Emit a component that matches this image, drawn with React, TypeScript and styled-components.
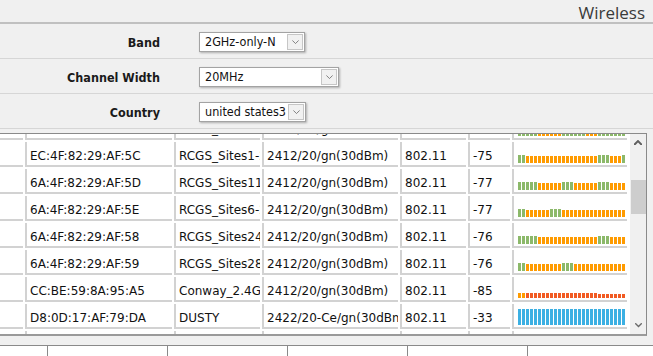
import React, { useLayoutEffect, useRef } from "react";
import styled, { createGlobalStyle } from "styled-components";

const GlobalStyle = createGlobalStyle`
  html, body { margin: 0; padding: 0; background: #f0f0f0; }
  body { width: 653px; height: 356px; overflow: hidden; }
  * { box-sizing: border-box; }
`;

const condensed = `"DejaVu Sans Condensed", "DejaVu Sans", "Liberation Sans Narrow", sans-serif`;

const Page = styled.div`
  display: flex;
  flex-direction: column;
  width: 653px;
  height: 356px;
  background: #f0f0f0;
  overflow: hidden;
`;

const TitleBar = styled.div`
  height: 24px;
  display: flex;
  justify-content: flex-end;
  align-items: flex-end;
  padding-right: 8px;
  border-bottom: 2px solid #c0c0c0;
`;

const Title = styled.h1`
  margin: 0;
  font-family: "Open Sans", "Noto Sans", sans-serif;
  font-weight: 400;
  font-size: 17px;
  line-height: 18px;
  color: #3a3a3a;
`;

const Form = styled.div`
  display: flex;
  flex-direction: column;
`;

const FormRow = styled.div`
  height: 35px;
  padding-top: 2px;
  display: flex;
  align-items: center;
  gap: 39px;
  border-bottom: 1px solid #d6d6d6;
`;

const Label = styled.label`
  width: 160px;
  text-align: right;
  font-family: ${condensed};
  font-stretch: condensed;
  font-weight: bold;
  font-size: 12.5px;
  color: #1a1a1a;
`;

const SelectBox = styled.div<{ $width: number }>`
  width: ${(p) => p.$width}px;
  height: 20px;
  display: flex;
  align-items: stretch;
  background: #fff;
  border: 1px solid #a3a3a3;
  box-shadow: 1px 1px 2px rgba(0, 0, 0, 0.28);
`;

const SelectValue = styled.span`
  flex: 1;
  min-width: 0;
  overflow: hidden;
  white-space: nowrap;
  padding-left: 5px;
  font-family: ${condensed};
  font-stretch: condensed;
  font-size: 12.5px;
  line-height: 18px;
  color: #111;
`;

const ArrowBox = styled.span`
  flex: 0 0 16px;
  margin: 1px;
  border: 1px solid #c6c6c6;
  background: #f1f1f1;
  display: flex;
  align-items: center;
  justify-content: center;
`;

const Frame = styled.div`
  margin-top: 4px;
  width: 647px;
  height: 203px;
  display: flex;
  border-top: 1px solid #8a8a8a;
  border-right: 1px solid #8a8a8a;
  border-bottom: 2px solid #9a9a9a;
  background: #fff;
`;

const Viewport = styled.div`
  flex: 0 0 630px;
  height: 200px;
  overflow: hidden;
  background: #fff;
`;

const RowList = styled.div`
  display: flex;
  flex-direction: column;
  gap: 2px;
`;

const Row = styled.div`
  display: grid;
  grid-template-columns: 23px 147px 86px 136px 66px 42px 115px;
  column-gap: 2px;
`;

const Cell = styled.div<{ $first?: boolean }>`
  height: 25px;
  padding: 7px 0 0 3px;
  border-bottom: 2px solid #d2d2d2;
  border-left: ${(p) => (p.$first ? "none" : "2px solid #d2d2d2")};
  font-family: "DejaVu Sans", Verdana, sans-serif;
  font-size: 12px;
  line-height: 14px;
  color: #111;
  white-space: nowrap;
  overflow: hidden;
`;

const BarCell = styled.div`
  height: 25px;
  padding: 0 0 2px 4px;
  border-bottom: 2px solid #d2d2d2;
  border-left: 2px solid #d2d2d2;
  display: flex;
  align-items: flex-end;
  gap: 1px;
  overflow: hidden;
`;

type BarKind = "g" | "o" | "O" | "r" | "s" | "b";

const barStyle: Record<BarKind, { h: number; c: string }> = {
  g: { h: 8, c: "#8cb96a" },
  o: { h: 7, c: "#ff9b00" },
  O: { h: 5, c: "#ff9b00" },
  r: { h: 5, c: "#f15a22" },
  s: { h: 4, c: "#f15a22" },
  b: { h: 16, c: "#3cb0e3" },
};

const Bar = styled.span<{ $kind: BarKind }>`
  flex: 0 0 3px;
  height: ${(p) => barStyle[p.$kind].h}px;
  background: ${(p) => barStyle[p.$kind].c};
`;

const Scrollbar = styled.div`
  flex: 0 0 16px;
  height: 200px;
  background: #f0f0f0;
  display: flex;
  flex-direction: column;
`;

const ScrollArrow = styled.div`
  flex: 0 0 17px;
  display: flex;
  align-items: center;
  justify-content: center;
`;

const Track = styled.div`
  flex: 1;
  display: flex;
  flex-direction: column;
`;

const Thumb = styled.div<{ $offset: number; $size: number }>`
  margin-top: ${(p) => p.$offset}px;
  margin-left: 1px;
  width: 15px;
  height: ${(p) => p.$size}px;
  background: #cdcdcd;
`;

const BottomStrip = styled.div`
  margin-top: 9px;
  height: 11px;
  display: flex;
  background: #fff;
  border-top: 1px solid #8a8a8a;
`;

const BottomCell = styled.div<{ $width?: number }>`
  flex: ${(p) => (p.$width ? `0 0 ${p.$width}px` : "1")};
  border-right: ${(p) => (p.$width ? "1px solid #8a8a8a" : "none")};
`;

const Chevron = ({ dir, size = 8, color = "#5f5f5f", stroke = 2 }: { dir: "up" | "down"; size?: number; color?: string; stroke?: number }) => (
  <svg width={size} height={size / 2 + 1} viewBox="0 0 8 5" fill="none">
    <polyline
      points={dir === "up" ? "0.8,4.3 4,1.1 7.2,4.3" : "0.8,0.8 4,4 7.2,0.8"}
      stroke={color}
      strokeWidth={stroke}
      strokeLinecap="square"
      strokeLinejoin="miter"
    />
  </svg>
);

const Select = ({ value, width }: { value: string; width: number }) => (
  <SelectBox $width={width} role="combobox">
    <SelectValue>{value}</SelectValue>
    <ArrowBox>
      <Chevron dir="down" size={7} color="#707070" stroke={1} />
    </ArrowBox>
  </SelectBox>
);

type Network = { mac: string; ssid: string; channel: string; mode: string; signal: string; bars: string };

const networks: Network[] = [
  { mac: "6A:4F:82:29:AF:5B", ssid: "RCGS_Sites3-2.4G", channel: "2412/20/gn(30dBm)", mode: "802.11", signal: "-74", bars: "ggggg" + "oooooo" + "gggggg" + "ooo" + "ggggggg" },
  { mac: "EC:4F:82:29:AF:5C", ssid: "RCGS_Sites1-2.4G", channel: "2412/20/gn(30dBm)", mode: "802.11", signal: "-75", bars: "gg" + "o".repeat(18) + "ggg" + "ooo" + "g" },
  { mac: "6A:4F:82:29:AF:5D", ssid: "RCGS_Sites11-2.4G", channel: "2412/20/gn(30dBm)", mode: "802.11", signal: "-77", bars: "ggggg" + "oooooo" + "ggg" + "oooooo" + "ggg" + "oooo" },
  { mac: "6A:4F:82:29:AF:5E", ssid: "RCGS_Sites6-2.4G", channel: "2412/20/gn(30dBm)", mode: "802.11", signal: "-77", bars: "gg" + "oooooo" + "ggg" + "o".repeat(16) },
  { mac: "6A:4F:82:29:AF:58", ssid: "RCGS_Sites24-2.4G", channel: "2412/20/gn(30dBm)", mode: "802.11", signal: "-76", bars: "ggggg" + "o".repeat(15) + "ggg" + "oooo" },
  { mac: "6A:4F:82:29:AF:59", ssid: "RCGS_Sites28-2.4G", channel: "2412/20/gn(30dBm)", mode: "802.11", signal: "-76", bars: "gg" + "o".repeat(9) + "ggg" + "o".repeat(13) },
  { mac: "CC:BE:59:8A:95:A5", ssid: "Conway_2.4G", channel: "2412/20/gn(30dBm)", mode: "802.11", signal: "-85", bars: "OO" + "r".repeat(18) + "s".repeat(7) },
  { mac: "D8:0D:17:AF:79:DA", ssid: "DUSTY", channel: "2422/20-Ce/gn(30dBm)", mode: "802.11", signal: "-33", bars: "b".repeat(27) },
  { mac: "F4:92:BF:6C:10:22", ssid: "NETGEAR42", channel: "2437/20/gn(30dBm)", mode: "802.11", signal: "-88", bars: "s".repeat(27) },
];

const SCROLL_TOP = 19;

export default function App() {
  const viewRef = useRef<HTMLDivElement>(null);

  useLayoutEffect(() => {
    if (viewRef.current) viewRef.current.scrollTop = SCROLL_TOP;
  }, []);

  const thumbSize = 34;
  const thumbOffset = 29;

  return (
    <>
      <GlobalStyle />
      <Page>
        <TitleBar>
          <Title>Wireless</Title>
        </TitleBar>
        <Form>
          <FormRow>
            <Label>Band</Label>
            <Select value="2GHz-only-N" width={106} />
          </FormRow>
          <FormRow>
            <Label>Channel Width</Label>
            <Select value="20MHz" width={140} />
          </FormRow>
          <FormRow>
            <Label>Country</Label>
            <Select value="united states3" width={107} />
          </FormRow>
        </Form>
        <Frame>
          <Viewport ref={viewRef}>
            <RowList>
              {networks.map((n) => (
                <Row key={n.mac}>
                  <Cell $first />
                  <Cell>{n.mac}</Cell>
                  <Cell>{n.ssid}</Cell>
                  <Cell>{n.channel}</Cell>
                  <Cell>{n.mode}</Cell>
                  <Cell>{n.signal}</Cell>
                  <BarCell>
                    {n.bars.split("").map((k, i) => (
                      <Bar key={i} $kind={k as BarKind} />
                    ))}
                  </BarCell>
                </Row>
              ))}
            </RowList>
          </Viewport>
          <Scrollbar>
            <ScrollArrow>
              <Chevron dir="up" />
            </ScrollArrow>
            <Track>
              <Thumb $offset={thumbOffset} $size={thumbSize} />
            </Track>
            <ScrollArrow>
              <Chevron dir="down" size={7} stroke={1.6} color="#6a6a6a" />
            </ScrollArrow>
          </Scrollbar>
        </Frame>
        <BottomStrip>
          <BottomCell $width={48} />
          <BottomCell $width={120} />
          <BottomCell $width={120} />
          <BottomCell $width={120} />
          <BottomCell $width={120} />
          <BottomCell />
        </BottomStrip>
      </Page>
    </>
  );
}
